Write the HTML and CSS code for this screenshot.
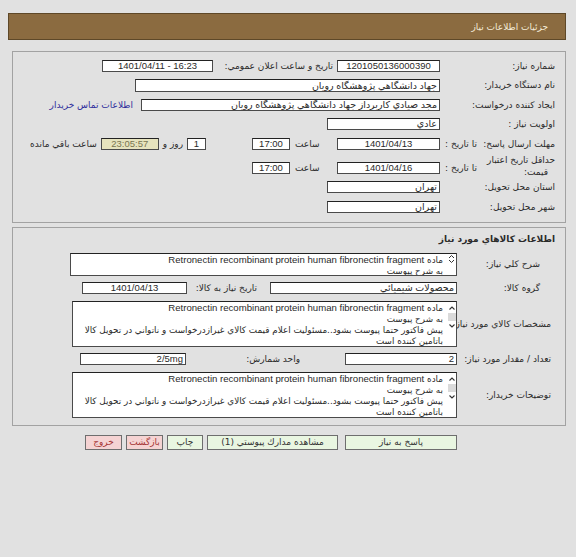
FILE: index.html
```html
<!DOCTYPE html>
<html lang="fa" dir="rtl">
<head>
<meta charset="utf-8">
<title>جزئيات اطلاعات نياز</title>
<link rel="stylesheet" href="styles.css">
</head>
<body>
<div class="header">جزئيات اطلاعات نياز</div>

<div class="box box1">
  <div class="row">
    <div class="lbl">شماره نياز:</div>
    <div class="field w103 center">1201050136000390</div>
    <div class="lbl2 w124">تاريخ و ساعت اعلان عمومي:</div>
    <div class="field w111 center ltr" dir="ltr">1401/04/11 - 16:23</div>
  </div>
  <div class="row">
    <div class="lbl">نام دستگاه خريدار:</div>
    <div class="field w305 tall">جهاد دانشگاهي پژوهشگاه رويان</div>
  </div>
  <div class="row">
    <div class="lbl">ايجاد كننده درخواست:</div>
    <div class="field w299">مجد صيادي كاربرداز جهاد دانشگاهي پژوهشگاه رويان</div>
    <a class="link" href="#">اطلاعات تماس خريدار</a>
  </div>
  <div class="row">
    <div class="lbl">اولويت نياز :</div>
    <div class="field w113">عادي</div>
  </div>
  <div class="row">
    <div class="lbl split"><span>مهلت ارسال پاسخ:</span><span>تا تاريخ :</span></div>
    <div class="field w103 center">1401/04/13</div>
    <div class="saat">ساعت</div>
    <div class="field w38 center">17:00</div>
    <div class="field w19 center days">1</div>
    <div class="lbl3">روز و</div>
    <div class="field w58 center timer">23:05:57</div>
    <div class="lbl3">ساعت باقي مانده</div>
  </div>
  <div class="row row-tall">
    <div class="lbl split"><span class="two">حداقل تاريخ اعتبار<br><span class="ln2">قيمت:</span></span><span class="low">تا تاريخ :</span></div>
    <div class="field w103 center low">1401/04/16</div>
    <div class="saat low">ساعت</div>
    <div class="field w38 center low">17:00</div>
  </div>
  <div class="row">
    <div class="lbl">استان محل تحويل:</div>
    <div class="field w113">تهران</div>
  </div>
  <div class="row">
    <div class="lbl">شهر محل تحويل:</div>
    <div class="field w113">تهران</div>
  </div>
</div>

<div class="box box2">
  <div class="title">اطلاعات كالاهاي مورد نياز</div>
  <div class="row2">
    <div class="lbl-b">شرح كلي نياز:</div>
    <div class="tarea w387 h23">
      <div class="sbar small">
        <svg width="7" height="10" viewBox="0 0 7 10"><polyline points="1,4 3.5,1.5 6,4" fill="none" stroke="#333" stroke-width="1"/><polyline points="1,6 3.5,8.5 6,6" fill="none" stroke="#333" stroke-width="1"/></svg>
      </div>
      <div class="ttext">ماده <span class="en">Retronectin recombinant protein human fibronectin fragment</span><br>به شرح پيوست</div>
    </div>
  </div>
  <div class="row2 fields">
    <div class="lbl-b">گروه كالا:</div>
    <div class="field w187">محصولات شيميائي</div>
    <div class="lbl2 w83 pr13">تاريخ نياز به كالا:</div>
    <div class="field w105 center">1401/04/13</div>
  </div>
  <div class="row2">
    <div class="lbl-b pr14">مشخصات كالاي مورد نياز:</div>
    <div class="tarea w385 h46">
      <div class="sbar">
        <svg class="arr" width="8" height="8" viewBox="0 0 8 8"><polyline points="1.5,5.5 4,3 6.5,5.5" fill="none" stroke="#333" stroke-width="1.1"/></svg>
        <div class="thumb"></div>
        <svg class="arr" width="8" height="8" viewBox="0 0 8 8"><polyline points="1.5,2.5 4,5 6.5,2.5" fill="none" stroke="#333" stroke-width="1.1"/></svg>
      </div>
      <div class="ttext">ماده <span class="en">Retronectin recombinant protein human fibronectin fragment</span><br>به شرح پيوست<br>پيش فاكتور حتما پيوست بشود..مسئوليت اعلام قيمت كالاي غيرازدرخواست و ناتواني در تحويل كالا<br>باتامين كننده است</div>
    </div>
  </div>
  <div class="row2 fields">
    <div class="lbl-b pr14">تعداد / مقدار مورد نياز:</div>
    <div class="field w112">2</div>
    <div class="lbl2 w159 pr45">واحد شمارش:</div>
    <div class="field w106">2/5mg</div>
  </div>
  <div class="row2">
    <div class="lbl-b pr14">توضيحات خريدار:</div>
    <div class="tarea w385 h46">
      <div class="sbar">
        <svg class="arr" width="8" height="8" viewBox="0 0 8 8"><polyline points="1.5,5.5 4,3 6.5,5.5" fill="none" stroke="#333" stroke-width="1.1"/></svg>
        <div class="thumb"></div>
        <svg class="arr" width="8" height="8" viewBox="0 0 8 8"><polyline points="1.5,2.5 4,5 6.5,2.5" fill="none" stroke="#333" stroke-width="1.1"/></svg>
      </div>
      <div class="ttext">ماده <span class="en">Retronectin recombinant protein human fibronectin fragment</span><br>به شرح پيوست<br>پيش فاكتور حتما پيوست بشود..مسئوليت اعلام قيمت كالاي غيرازدرخواست و ناتواني در تحويل كالا<br>باتامين كننده است</div>
    </div>
  </div>
</div>

<div class="buttons">
  <button class="btn green w112">پاسخ به نياز</button>
  <button class="btn green w131 gap7">مشاهده مدارك پيوستي (1)</button>
  <button class="btn green w36">چاپ</button>
  <button class="btn pink w37">بازگشت</button>
  <button class="btn pink w37">خروج</button>
</div>
</body>
</html>
```

FILE: styles.css
```css
* { box-sizing: border-box; }
html, body { margin: 0; padding: 0; }
body {
  background: #e1e1e1;
  font-family: "DejaVu Sans", sans-serif;
  font-size: 9px;
  color: #2a2a2a;
  width: 576px;
  height: 557px;
  overflow: hidden;
}
.header {
  margin: 13px 10px 0 8px;
  height: 27px;
  background: #8b6b40;
  border: 1px solid #5e4828;
  color: #f4ecd8;
  font-size: 9px;
  display: flex;
  align-items: center;
  padding-right: 17px;
}
.box {
  margin: 0 10px 0 12px;
  border: 1px solid #a2a2a2;
}
.box1 { margin-top: 11px; padding: 4px 0 5px; }
.box2 {
  margin-top: 4px;
  padding: 5.5px 0 7px;
  display: flex;
  flex-direction: column;
  gap: 6.5px;
}
.row {
  display: flex;
  align-items: center;
  height: 19.5px;
}
.row-tall { height: 24px; }
.lbl {
  width: 125px;
  flex: none;
  padding: 0 10px 0 5px;
  white-space: nowrap;
}
.lbl.split { display: flex; justify-content: space-between; align-items: center; }
.two { line-height: 12px; }
.ln2 { padding-right: 7px; }
.low { position: relative; top: 2px; }
.lbl2 {
  flex: none;
  padding: 0 4px;
  white-space: nowrap;
}
.lbl3 { flex: none; padding: 0 4px; white-space: nowrap; }
.saat { width: 47px; flex: none; text-align: left; padding-left: 5px; }
.field {
  flex: none;
  height: 12px;
  background: #fff;
  border: 1px solid #4a4a4a;
  border-top-color: #222;
  font-family: "Liberation Sans", "DejaVu Sans", sans-serif;
  font-size: 9.5px;
  line-height: 10px;
  padding: 0 2px;
  white-space: nowrap;
  overflow: hidden;
  text-align: right;
}
.field.tall { height: 13px; line-height: 11px; }
.center { text-align: center; }
.ltr { direction: ltr; text-align: center; }
.days { margin-right: 46px; }
.timer { background: #e6e3bd; color: #7a7650; }
.link {
  color: #2e2e9c;
  text-decoration: none;
  padding-right: 8px;
  white-space: nowrap;
}
.w19 { width: 19px; }
.w36 { width: 36px; }
.w37 { width: 37px; }
.w38 { width: 38px; }
.w58 { width: 58px; }
.w83 { width: 83px; }
.w103 { width: 103px; }
.w105 { width: 105px; }
.w106 { width: 106px; }
.w111 { width: 111px; }
.w112 { width: 112px; }
.w113 { width: 113px; }
.w124 { width: 124px; }
.w131 { width: 131px; }
.w159 { width: 159px; }
.w187 { width: 187px; }
.w299 { width: 299px; }
.w305 { width: 305px; }
.w385 { width: 385px; }
.w387 { width: 387px; }
.pr13 { padding-right: 13px; }
.pr14 { padding-right: 14px !important; }
.pr45 { padding-right: 45px; }

.title {
  font-weight: bold;
  height: 13px;
  line-height: 13px;
  padding-right: 10px;
  font-size: 9px;
}
.row2 {
  display: flex;
  align-items: center;
}
.lbl-b {
  width: 108px;
  flex: none;
  padding-right: 25px;
  white-space: nowrap;
}
.tarea {
  flex: none;
  background: #fff;
  border: 1px solid #4a4a4a;
  border-top-color: #222;
  display: flex;
  overflow: hidden;
}
.h23 { height: 23px; }
.h46 { height: 46px; }
.sbar {
  width: 9px;
  flex: none;
  display: flex;
  flex-direction: column;
  align-items: center;
  padding-top: 2px;
}
.sbar.small { padding-top: 0; }
.arr { display: block; }
.thumb { width: 8px; height: 8px; background: #dadada; margin: 1px 0; }
.ttext {
  flex: 1;
  padding: 0 4px 0 0;
  font-family: "DejaVu Sans", sans-serif;
  font-size: 8.8px;
  line-height: 11px;
  white-space: nowrap;
  text-align: right;
}
.en {
  font-family: "Liberation Sans", sans-serif;
  font-size: 9.6px;
}
.buttons {
  display: flex;
  gap: 4px;
  padding-right: 119px;
  margin-top: 9px;
}
.btn {
  height: 15px;
  padding: 0;
  border: 1px solid #6e6e6e;
  font-family: "DejaVu Sans", sans-serif;
  font-size: 9px;
  line-height: 13px;
  color: #333;
}
.green { background: #e9f6e1; }
.pink { background: #f5d3d3; color: #a53535; }
.gap7 { margin-right: 3px; }
```
